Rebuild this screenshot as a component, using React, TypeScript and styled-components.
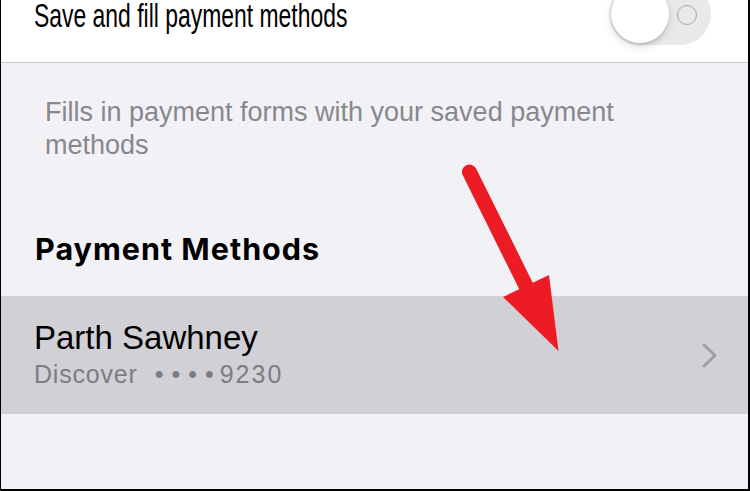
import React from "react";
import styled, { createGlobalStyle } from "styled-components";

const GlobalStyle = createGlobalStyle`
  html, body {
    margin: 0;
    padding: 0;
    background: #ffffff;
  }
  body {
    font-family: "Liberation Sans", Arial, sans-serif;
    -webkit-font-smoothing: antialiased;
  }
`;

const Frame = styled.div`
  position: relative;
  box-sizing: border-box;
  width: 750px;
  height: 491px;
  overflow: hidden;
  display: flex;
  flex-direction: column;
  background: #f2f2f6;
  border-left: 1px solid #000;
  border-right: 2px solid #000;
  border-bottom: 2px solid #000;
`;

const ToggleCell = styled.div`
  display: flex;
  align-items: flex-start;
  justify-content: space-between;
  height: 62px;
  padding: 0 37px 0 33px;
  background: #ffffff;
  border-bottom: 1px solid #c8c7cc;
  overflow: hidden;
  flex-shrink: 0;
`;

const CellLabel = styled.span`
  margin-top: -2px;
  font-size: 34px;
  line-height: 34px;
  color: #000;
  white-space: nowrap;
  transform: scaleX(0.674);
  transform-origin: left center;
`;

const Track = styled.div`
  position: relative;
  width: 102px;
  height: 62px;
  margin-top: -17px;
  border-radius: 31px;
  background: #e9e9eb;
  flex-shrink: 0;
`;

const Knob = styled.div`
  position: absolute;
  top: 2px;
  left: 2px;
  width: 58px;
  height: 58px;
  border-radius: 50%;
  background: #ffffff;
  box-shadow: 0 3px 8px rgba(0, 0, 0, 0.15), 0 3px 1px rgba(0, 0, 0, 0.06),
    0 0 0 0.5px rgba(0, 0, 0, 0.04);
`;

const OffMark = styled.div`
  position: absolute;
  top: 22px;
  left: 68px;
  box-sizing: border-box;
  width: 20px;
  height: 20px;
  border-radius: 50%;
  border: 1.5px solid #a6a6a8;
`;

const FooterNote = styled.p`
  margin: 0;
  padding: 33px 60px 0 44px;
  font-size: 27px;
  line-height: 33px;
  color: #88888c;
`;

const SectionHeader = styled.h2`
  margin: 69px 0 29px;
  padding-left: 34px;
  font-family: Inter, "Liberation Sans", sans-serif;
  font-size: 30.5px;
  line-height: 36px;
  font-weight: 700;
  letter-spacing: 1px;
  color: #000;
`;

const Row = styled.div`
  display: flex;
  align-items: center;
  justify-content: space-between;
  height: 118px;
  padding: 0 31px 0 33px;
  background: #d1d0d5;
  flex-shrink: 0;
`;

const RowText = styled.div`
  display: flex;
  flex-direction: column;
  padding-bottom: 2px;
`;

const RowTitle = styled.span`
  font-size: 33px;
  line-height: 38px;
  color: #000;
`;

const RowSubtitle = styled.span`
  margin-top: 2px;
  font-size: 25px;
  line-height: 30px;
  letter-spacing: 0.8px;
  color: #7d7d81;
`;

const Dots = styled.span`
  margin-left: 17px;
  letter-spacing: 8px;
`;

const Digits = styled.span`
  margin-left: -2px;
  letter-spacing: 2px;
`;

const Chevron = styled.svg`
  width: 15px;
  height: 25px;
  flex-shrink: 0;
`;

const ArrowLayer = styled.svg`
  position: absolute;
  top: 0;
  left: -1px;
  width: 750px;
  height: 491px;
  pointer-events: none;
`;

export default function App() {
  return (
    <>
      <GlobalStyle />
      <Frame>
        <ToggleCell>
          <CellLabel>Save and fill payment methods</CellLabel>
          <Track>
            <Knob />
            <OffMark />
          </Track>
        </ToggleCell>

        <FooterNote>
          Fills in payment forms with your saved payment methods
        </FooterNote>

        <SectionHeader>Payment Methods</SectionHeader>

        <Row>
          <RowText>
            <RowTitle>Parth Sawhney</RowTitle>
            <RowSubtitle>
              Discover<Dots>••••</Dots>
              <Digits>9230</Digits>
            </RowSubtitle>
          </RowText>
          <Chevron viewBox="0 0 15 25">
            <polyline
              points="2,2 13,12.5 2,23"
              fill="none"
              stroke="#9d9da2"
              strokeWidth="3"
              strokeLinecap="round"
              strokeLinejoin="round"
            />
          </Chevron>
        </Row>

        <ArrowLayer viewBox="0 0 750 491">
          <line
            x1="469.5"
            y1="172"
            x2="528"
            y2="290"
            stroke="#ed1c24"
            strokeWidth="15"
            strokeLinecap="round"
          />
          <polygon points="503,297 549,275 558.5,351" fill="#ed1c24" />
        </ArrowLayer>
      </Frame>
    </>
  );
}
